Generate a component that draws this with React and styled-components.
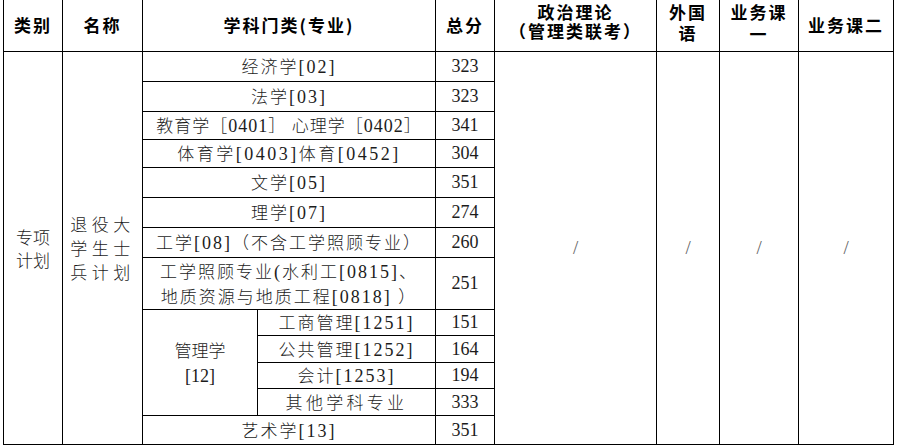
import React from 'react';
import styled, { createGlobalStyle } from 'styled-components';

const GlobalStyle = createGlobalStyle`
  html, body {
    margin: 0;
    padding: 0;
    background: #ffffff;
  }
  body {
    width: 898px;
    height: 448px;
    overflow: hidden;
  }
`;

const Page = styled.div`
  padding-left: 3px;
`;

const Table = styled.table`
  border-collapse: collapse;
  table-layout: fixed;
  width: 891px;
`;

const Row = styled.tr`
  height: ${(props) => props.$h}px;
`;

const HeadCell = styled.th`
  border: 1px solid #000;
  border-top: none;
  padding: ${(props) => (props.$top ? `${props.$top}px 0 0` : '0')};
  vertical-align: ${(props) => (props.$top ? 'top' : 'middle')};
  text-align: center;
  font-family: "Noto Sans CJK SC", sans-serif;
  font-weight: 700;
  font-size: 17px;
  line-height: ${(props) => props.$lh || 20}px;
  letter-spacing: 2px;
  color: #000;
`;

const Cell = styled.td`
  border: 1px solid #000;
  padding: 0;
  vertical-align: middle;
  text-align: center;
  font-family: "Noto Sans CJK SC", sans-serif;
  font-weight: 300;
  font-size: 17px;
  line-height: ${(props) => props.$lh || 20}px;
  letter-spacing: ${(props) => (props.$ls === undefined ? 2 : props.$ls)}px;
  color: #1c1c1c;
  white-space: nowrap;
`;

const Latin = styled.span`
  font-family: "Liberation Serif", serif;
  font-weight: 400;
  font-size: 18px;
  line-height: 0;
`;

const Score = styled.td`
  border: 1px solid #000;
  padding: 0;
  vertical-align: middle;
  text-align: center;
  font-family: "Liberation Serif", serif;
  font-size: 18px;
  line-height: 20px;
  color: #1c1c1c;
`;

const Slash = styled.td`
  border: 1px solid #000;
  padding: 0;
  vertical-align: middle;
  text-align: center;
  font-family: "Liberation Serif", serif;
  font-size: 19px;
  line-height: 20px;
  color: #666;
`;

// wrap the ascii runs (codes, brackets) so they take the serif face
const Text = ({ children }) =>
  children.split(/([\[\]()0-9 ]+)/).map((part, i) =>
    /^[\[\]()0-9 ]+$/.test(part) ? <Latin key={i}>{part}</Latin> : part
  );

const widths = [59, 80, 115, 178, 59, 162, 63, 79, 95];

const subjects = [
  { name: '经济学[02]', score: 323, h: 30 },
  { name: '法学[03]', score: 323, h: 30 },
  { name: '教育学［0401］ 心理学［0402］', score: 341, h: 28, ls: 1 },
  { name: '体育学[0403]体育[0452]', score: 304, h: 28, ls: 2.5 },
  { name: '文学[05]', score: 351, h: 30 },
  { name: '理学[07]', score: 274, h: 30 },
  { name: '工学[08]（不含工学照顾专业）', score: 260, h: 30 },
];

const management = [
  { name: '工商管理[1251]', score: 151, h: 26 },
  { name: '公共管理[1252]', score: 164, h: 27 },
  { name: '会计[1253]', score: 194, h: 26 },
  { name: '其他学科专业', score: 333, h: 27, ls: 3.3 },
];

const App = () => {
  return (
    <Page>
      <GlobalStyle />
      <Table>
        <colgroup>
          {widths.map((w, i) => (
            <col key={i} style={{ width: w }} />
          ))}
        </colgroup>
        <tbody>
          <Row $h={51}>
            <HeadCell>类别</HeadCell>
            <HeadCell>名称</HeadCell>
            <HeadCell colSpan={2}>学科门类(专业)</HeadCell>
            <HeadCell>总分</HeadCell>
            <HeadCell $top={2} $lh={19}>
              政治理论
              <br />
              （管理类联考）
            </HeadCell>
            <HeadCell $top={1} $lh={21}>
              外国
              <br />
              语
            </HeadCell>
            <HeadCell $top={1} $lh={22}>
              业务课
              <br />一
            </HeadCell>
            <HeadCell>业务课二</HeadCell>
          </Row>

          {subjects.map((s, i) => (
            <Row key={s.name} $h={s.h}>
              {i === 0 && (
                <>
                  <Cell rowSpan={13} $ls={0} $lh={23}>
                    专项
                    <br />
                    计划
                  </Cell>
                  <Cell rowSpan={13} $ls={4.5} $lh={24}>
                    退役大
                    <br />
                    学生士
                    <br />
                    兵计划
                  </Cell>
                </>
              )}
              <Cell colSpan={2} $ls={s.ls}>
                <Text>{s.name}</Text>
              </Cell>
              <Score>{s.score}</Score>
              {i === 0 && (
                <>
                  <Slash rowSpan={13}>/</Slash>
                  <Slash rowSpan={13}>/</Slash>
                  <Slash rowSpan={13}>/</Slash>
                  <Slash rowSpan={13}>/</Slash>
                </>
              )}
            </Row>
          ))}

          <Row $h={52}>
            <Cell colSpan={2} $lh={25}>
              <Text>工学照顾专业(水利工[0815]、</Text>
              <br />
              <Text>地质资源与地质工程[0818] ）</Text>
            </Cell>
            <Score>251</Score>
          </Row>

          {management.map((m, i) => (
            <Row key={m.name} $h={m.h}>
              {i === 0 && (
                <Cell rowSpan={4} $ls={0} $lh={25}>
                  管理学
                  <br />
                  <Latin>[12]</Latin>
                </Cell>
              )}
              <Cell $ls={m.ls}>
                <Text>{m.name}</Text>
              </Cell>
              <Score>{m.score}</Score>
            </Row>
          ))}

          <Row $h={29}>
            <Cell colSpan={2}>
              <Text>艺术学[13]</Text>
            </Cell>
            <Score>351</Score>
          </Row>
        </tbody>
      </Table>
    </Page>
  );
};

export default App;
